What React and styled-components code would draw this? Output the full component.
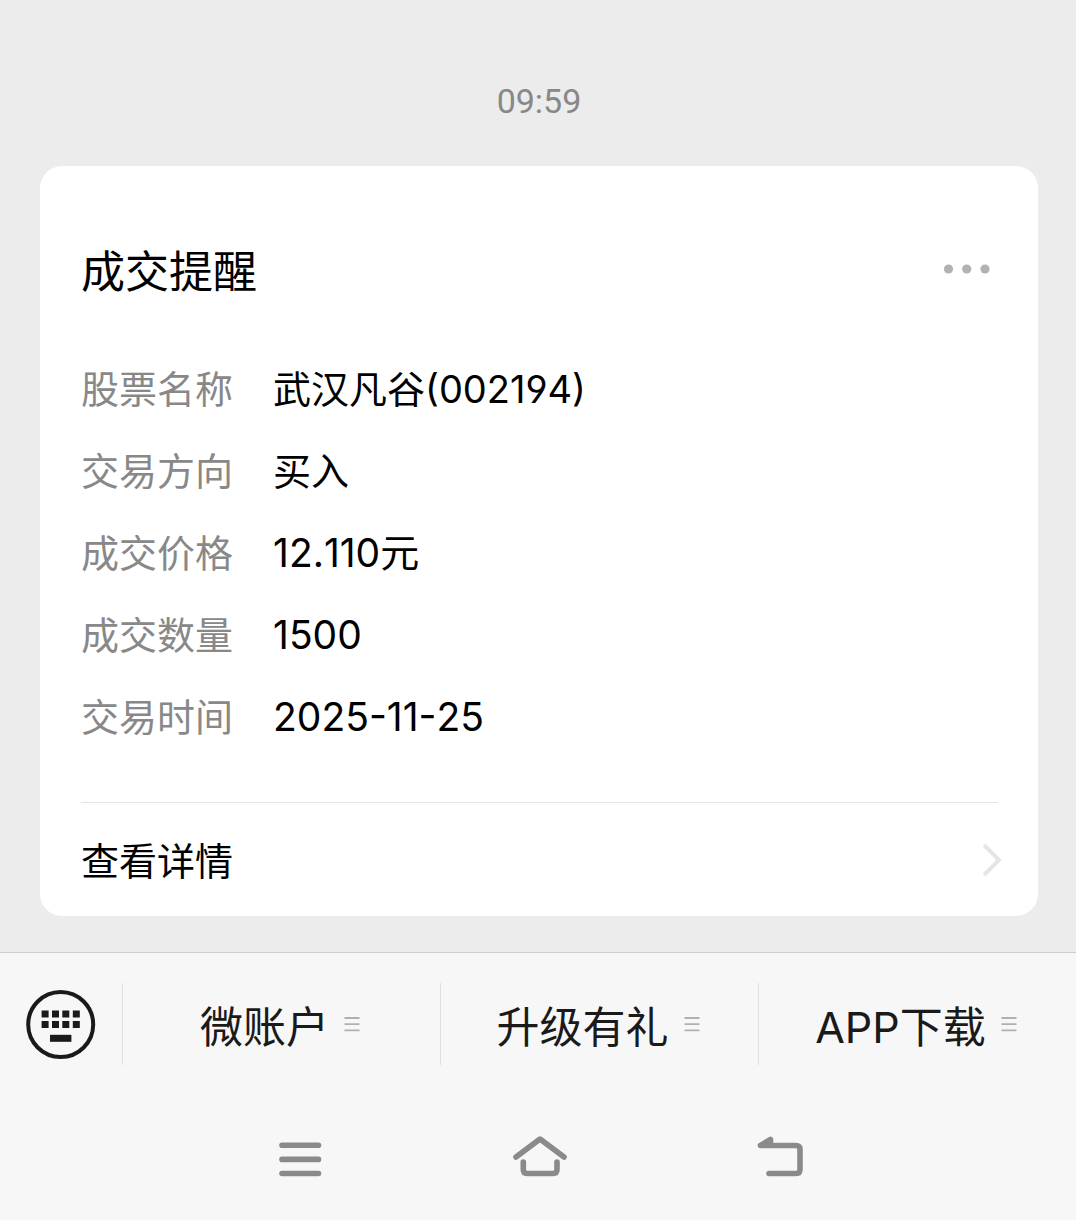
import styled, { createGlobalStyle } from "styled-components";

const GlobalStyle = createGlobalStyle`
  * {
    box-sizing: border-box;
  }
  body {
    margin: 0;
    background: #ececec;
    font-family: Inter, "Noto Sans CJK SC", sans-serif;
    font-kerning: none;
    font-feature-settings: "cv04";
    color: #000;
  }
  button {
    padding: 0;
    border: 0;
    background: none;
    color: inherit;
    font: inherit;
    cursor: pointer;
  }
  svg {
    display: block;
  }
`;

const Screen = styled.div`
  min-height: 100vh;
  display: flex;
  flex-direction: column;
`;

const Chat = styled.main`
  flex: 1;
  padding: 76px 38px 36px 40px;
`;

const Time = styled.time`
  display: block;
  padding-bottom: 40px;
  font-family: Roboto, sans-serif;
  font-size: 34px;
  line-height: 50px;
  text-align: center;
  color: #888;
`;

const Card = styled.article`
  padding: 76px 40px 0 41px;
  border-radius: 22px;
  background: #fff;
`;

const CardHeader = styled.header`
  display: flex;
  align-items: center;
  justify-content: space-between;
  margin-bottom: 62px;
  h2 {
    margin: 0;
    font-size: 44px;
    font-weight: 400;
    line-height: 60px;
  }
`;

const MoreButton = styled.button`
  padding: 0 7px 6px;
`;

const Details = styled.dl`
  display: grid;
  grid-template-columns: max-content 1fr;
  gap: 32px 40px;
  margin: 0;
  padding-bottom: 60px;
  border-bottom: 1px solid #e5e5e5;
  font-size: 38px;
  line-height: 50px;
`;

const Name = styled.dt`
  color: #888;
`;

const Value = styled.dd`
  margin: 0;
  font-size: ${({ $numeric }) => ($numeric ? "39px" : "38px")};
`;

const DetailLink = styled.a`
  display: flex;
  align-items: center;
  justify-content: space-between;
  height: 113px;
  padding-top: 2px;
  margin-right: -4px;
  font-size: 38px;
  line-height: 50px;
  color: inherit;
  text-decoration: none;
`;

const Bottom = styled.footer`
  border-top: 1px solid #cfcfcf;
  background: #f7f7f7;
`;

const MenuBar = styled.div`
  display: flex;
  padding: 30px 0;
`;

const KeyboardButton = styled.button`
  display: flex;
  align-items: center;
  justify-content: center;
  width: 122px;
  height: 82px;
`;

const MenuButton = styled.button`
  flex: 1;
  display: flex;
  align-items: center;
  justify-content: center;
  gap: 15px;
  height: 82px;
  padding-right: 3px;
  border-left: 1px solid #e0e0e0;
  font-size: 43px;
  line-height: 60px;
  color: #1a1a1a;
  span {
    padding-top: 6px;
  }
`;

const SystemNav = styled.nav`
  display: flex;
  padding: 37px 176px 38px 180px;
`;

const NavButton = styled.button`
  flex: 1;
  display: flex;
  justify-content: center;
`;

const details = [
  { name: "股票名称", value: "武汉凡谷(002194)" },
  { name: "交易方向", value: "买入" },
  { name: "成交价格", value: "12.110元", numeric: true },
  { name: "成交数量", value: "1500", numeric: true },
  { name: "交易时间", value: "2025-11-25", numeric: true },
];

const menus = ["微账户", "升级有礼", "APP下载"];

const MoreIcon = () => (
  <svg width="48" height="10" viewBox="0 0 48 10" fill="#b2b2b2">
    <circle cx="5.5" cy="5" r="4.6" />
    <circle cx="23.7" cy="5" r="4.6" />
    <circle cx="42" cy="5" r="4.6" />
  </svg>
);

const ArrowIcon = () => (
  <svg width="20" height="36" viewBox="0 0 20 36" fill="none">
    <path d="M2 2L17 17L2 32" stroke="#e5e5e5" strokeWidth="4" />
  </svg>
);

const KeyboardIcon = () => (
  <svg width="70" height="70" viewBox="0 0 70 70" fill="#1a1a1a">
    <circle cx="34.7" cy="35.5" r="32.5" fill="none" stroke="#1a1a1a" strokeWidth="4" />
    {[15.6, 26, 36.3, 46.8].map((x) => (
      <g key={x}>
        <rect x={x} y="21.5" width="7" height="7" />
        <rect x={x} y="32" width="7" height="7" />
      </g>
    ))}
    <rect x="24" y="45.8" width="21.4" height="7" />
  </svg>
);

const LinesIcon = () => (
  <svg width="16" height="16" viewBox="0 0 16 16" fill="none">
    <path d="M0.5 2H15.5M0.5 8.2H15.5M0.5 14.4H15.5" stroke="#b0b0b0" strokeWidth="1.8" />
  </svg>
);

const navIcons = [
  { label: "最近任务", path: "M9 13.3H45.5M9 27.4H45.5M9 41.5H45.5" },
  {
    label: "主页",
    path: "M3 25L27 7L51 25M10.3 30V37.5Q10.3 41.5 14.3 41.5H40Q44 41.5 44 37.5V30",
  },
  {
    label: "返回",
    path: "M17.5 7.5L7.5 13.5H43Q47 13.5 47 17.5V37.5Q47 41.5 43 41.5H16M9 13L17.5 9.5",
  },
];

export default function App() {
  return (
    <Screen>
      <GlobalStyle />
      <Chat>
        <Time>09:59</Time>
        <Card>
          <CardHeader>
            <h2>成交提醒</h2>
            <MoreButton aria-label="更多">
              <MoreIcon />
            </MoreButton>
          </CardHeader>
          <Details>
            {details.map(({ name, value, numeric }) => [
              <Name key={name}>{name}</Name>,
              <Value key={value} $numeric={numeric}>
                {value}
              </Value>,
            ])}
          </Details>
          <DetailLink href="#detail">
            查看详情
            <ArrowIcon />
          </DetailLink>
        </Card>
      </Chat>

      <Bottom>
        <MenuBar>
          <KeyboardButton aria-label="键盘">
            <KeyboardIcon />
          </KeyboardButton>
          {menus.map((menu) => (
            <MenuButton key={menu}>
              <span>{menu}</span>
              <LinesIcon />
            </MenuButton>
          ))}
        </MenuBar>
        <SystemNav>
          {navIcons.map(({ label, path }) => (
            <NavButton key={label} aria-label={label}>
              <svg width="55" height="50" viewBox="0 0 55 50" fill="none">
                <path
                  d={path}
                  stroke="#8a8a8a"
                  strokeWidth="5.6"
                  strokeLinecap="round"
                  strokeLinejoin="round"
                />
              </svg>
            </NavButton>
          ))}
        </SystemNav>
      </Bottom>
    </Screen>
  );
}
